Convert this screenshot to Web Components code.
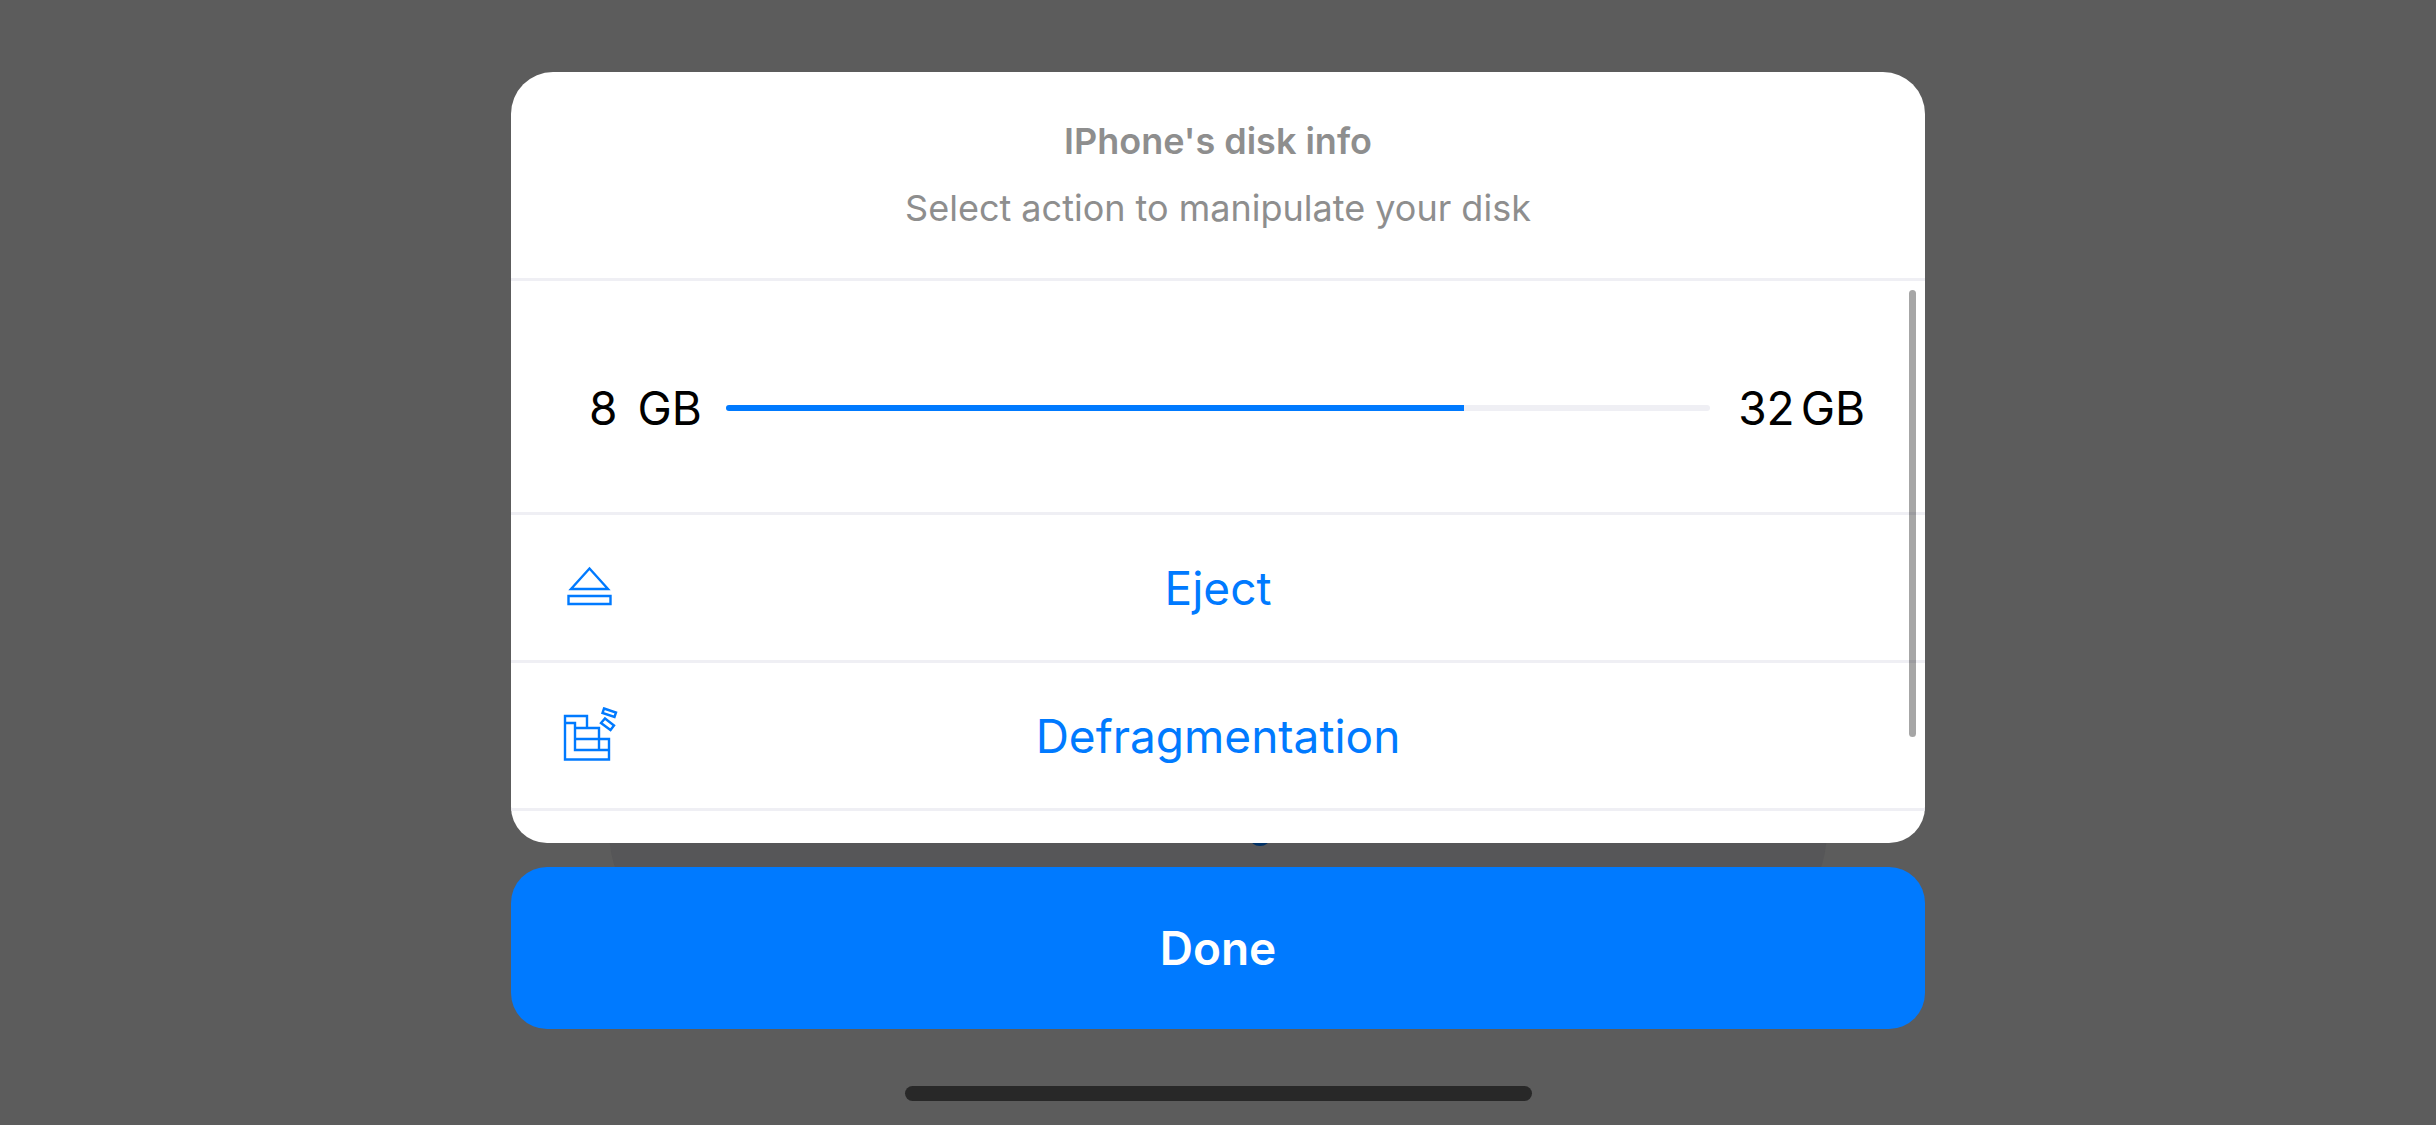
<!DOCTYPE html>
<html lang="en">
<head>
<meta charset="utf-8">
<title>Disk info</title>
<style>
body { margin: 0; background: #5c5c5c; font-family: Inter, "Liberation Sans", sans-serif; }
</style>
</head>
<body>
<disk-screen>
  <action-sheet>
    <sheet-header slot="header">
      <span slot="title">IPhone's disk info</span>
      <span slot="message">Select action to manipulate your disk</span>
    </sheet-header>
    <disk-usage value="75"><span slot="used">8</span><span slot="total">32</span></disk-usage>
    <sheet-action>
      <svg slot="icon" width="54" height="54" viewBox="0 0 54 54" fill="none" stroke="#007aff" stroke-width="2.4"><path d="M27.500 7.500 L46 28 H9 Z"/><path d="M6.500 35 H48.500 V43 H6.500 Z"/></svg>
      Eject
    </sheet-action>
    <sheet-action>
      <svg slot="icon" width="54" height="54" viewBox="0 0 54 54" fill="none" stroke="#007aff" stroke-width="2.4"><path d="M25 18 V7 H3 V50.500 H47 V30 H13 M3 14 H13 V41 H47 M13 19 H37 V41"/><path d="M42 -0.500 L54 3.500 L52.500 8 L40.500 4 Z M43 9.500 L52 16.500 L48.500 21 L39 14 Z"/></svg>
      Defragmentation
    </sheet-action>
  </action-sheet>
  <done-button>Done</done-button>
  <home-indicator slot="footer"></home-indicator>
</disk-screen>
<script>
function define(name, html, setup) {
  customElements.define(name, class extends HTMLElement {
    constructor() {
      super();
      this.attachShadow({ mode: "open" }).innerHTML = html;
    }
    connectedCallback() { if (setup) setup(this); }
  });
}

define("disk-screen", `
<style>
:host { display: flex; flex-direction: column; align-items: center; min-height: 100vh; box-sizing: border-box; padding: 72px 24px 24px; position: relative; isolation: isolate; overflow: hidden; }
main { display: flex; flex-direction: column; gap: 24px; width: 58.05vw; min-width: 700px; }
footer { margin-top: auto; }
.backdrop { position: absolute; z-index: -1; left: 25%; right: 25%; top: 160px; height: 790px; border-radius: 120px; background: #565658; }
.mark { position: absolute; z-index: -1; left: calc(50% + 32px); top: 830px; width: 20px; height: 16px; border-radius: 50%; background: #003166; }
</style>
<div class="backdrop"></div><div class="mark"></div>
<main><slot></slot></main><footer><slot name="footer"></slot></footer>`);

define("action-sheet", `
<style>
:host { display: block; background: #fff; border-radius: 42px 42px 36px 36px; overflow: hidden; position: relative; }
.body { padding-bottom: 32px; }
.thumb { position: absolute; top: 218px; right: 9px; width: 7px; height: 447px; border-radius: 4px; background: rgba(0,0,0,.35); }
</style>
<slot name="header"></slot><div class="body"><slot></slot></div><div class="thumb"></div>`);

define("sheet-header", `
<style>
:host { display: flex; flex-direction: column; align-items: center; text-align: center; gap: 20px; padding: 46px 24px 46px; border-bottom: 3px solid #efeff4; color: #8e8e8e; font-size: 36px; line-height: 47px; }
h1, p { margin: 0; font: inherit; }
h1 { font-weight: 600; }
</style>
<h1><slot name="title"></slot></h1><p><slot name="message"></slot></p>`);

define("disk-usage", `
<style>
:host { display: flex; align-items: center; box-sizing: border-box; height: 234px; padding: 22px 60px 0 78px; border-bottom: 3px solid #efeff4; color: #000; font-size: 46px; line-height: 60px; }
.amount { display: flex; }
.used { gap: 20px; }
.total { gap: 6px; }
progress { appearance: none; flex: 1; min-width: 0; height: 6px; margin: 0 28px 0 24px; border: 0; border-radius: 3px; overflow: hidden; background: #efeff4; }
progress::-webkit-progress-bar { background: #efeff4; }
progress::-webkit-progress-value { background: #007aff; }
</style>
<div class="amount used"><slot name="used"></slot><span>GB</span></div>
<progress max="100" aria-label="Disk usage"></progress>
<div class="amount total"><slot name="total"></slot><span>GB</span></div>`,
el => { el.shadowRoot.querySelector("progress").value = Number(el.getAttribute("value")); });

define("sheet-action", `
<style>
:host { display: block; border-bottom: 3px solid #efeff4; }
button { display: grid; grid-template-columns: 54px 1fr 54px; align-items: center; width: 100%; height: 145px; padding: 0 51px; border: 0; background: none; color: #007aff; font: inherit; font-size: 46px; line-height: 60px; cursor: pointer; }
::slotted(svg) { display: block; overflow: visible; }
</style>
<button type="button"><slot name="icon"></slot><span><slot></slot></span></button>`);

define("done-button", `
<style>
:host { display: block; }
button { display: block; width: 100%; height: 162px; border: 0; border-radius: 36px; background: #007aff; color: #fff; font: inherit; font-weight: 600; font-size: 46px; line-height: 60px; cursor: pointer; }
</style>
<button type="button"><slot></slot></button>`);

define("home-indicator", `
<style>
:host { display: block; width: 627px; height: 15px; border-radius: 8px; background: #282828; }
</style>`);
</script>
</body>
</html>
